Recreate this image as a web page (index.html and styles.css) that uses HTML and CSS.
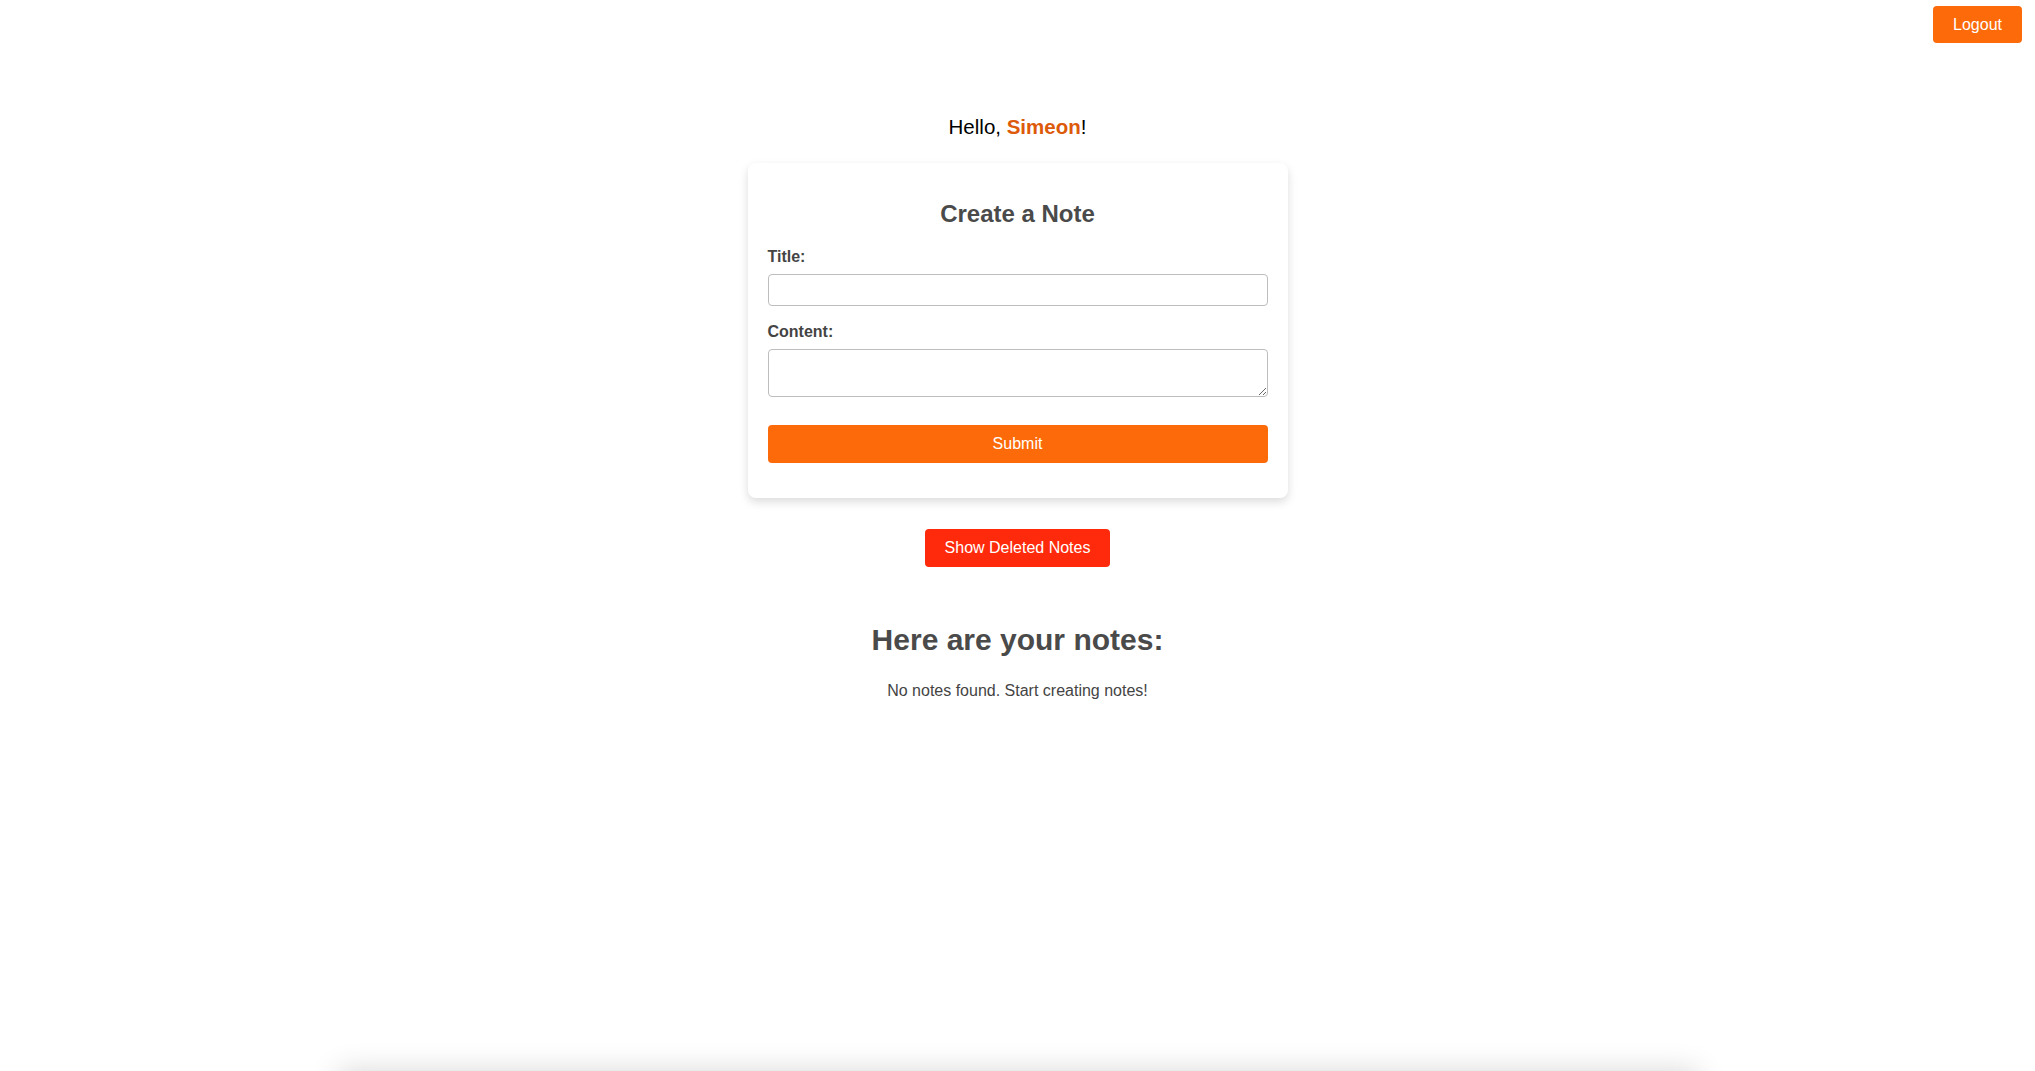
FILE: index.html
```html
<!DOCTYPE html>
<html lang="en">
<head>
<meta charset="utf-8">
<title>Notes</title>
<link rel="stylesheet" href="styles.css">
</head>
<body>
<div class="page">
  <header class="topbar">
    <button class="btn btn-orange btn-logout">Logout</button>
  </header>
  <main class="main">
    <p class="hello">Hello, <span class="name">Simeon</span>!</p>
    <section class="card">
      <h2 class="card-title">Create a Note</h2>
      <form class="note-form">
        <label class="label label-first" for="title">Title:</label>
        <input class="field field-input" id="title" type="text">
        <label class="label label-second" for="content">Content:</label>
        <textarea class="field field-area" id="content"></textarea>
        <button type="button" class="btn btn-orange btn-submit">Submit</button>
      </form>
    </section>
    <button class="btn btn-red btn-deleted">Show Deleted Notes</button>
    <h2 class="notes-title">Here are your notes:</h2>
    <p class="empty">No notes found. Start creating notes!</p>
  </main>
</div>
<footer class="footer"></footer>
</body>
</html>
```
FILE: styles.css
```css
html, body {
  margin: 0;
  padding: 0;
  background: #ffffff;
  font-family: "Liberation Sans", Arial, Helvetica, sans-serif;
}

.page {
  min-height: 1071px;
  box-sizing: border-box;
}

.topbar {
  display: flex;
  justify-content: flex-end;
  padding: 6px 13px 0 0;
}

.btn {
  border: none;
  color: #ffffff;
  font-family: "Liberation Sans", Arial, Helvetica, sans-serif;
  font-size: 16px;
  line-height: 18px;
  padding: 10px 20px;
  border-radius: 4px;
  cursor: pointer;
}

.btn-orange {
  background: #fc6a0a;
}

.btn-red {
  background: #ff2a0b;
}

.btn-logout {
  padding: 10px 20px 9px;
}

.main {
  display: flex;
  flex-direction: column;
  align-items: center;
}

.hello {
  margin: 72px 0 0;
  font-size: 20.5px;
  line-height: 23px;
  color: #000000;
}

.name {
  color: #dd5a0a;
  font-weight: bold;
}

.card {
  margin-top: 25px;
  width: 500px;
  padding: 20px 20px 35px;
  background: #ffffff;
  border-radius: 8px;
  box-shadow: 0 4px 10px rgba(0, 0, 0, 0.14);
}

.card-title {
  margin: 17px 0 0;
  text-align: center;
  font-size: 24px;
  line-height: 28px;
  color: #4a4a4a;
}

.note-form {
  display: flex;
  flex-direction: column;
}

.label {
  display: block;
  font-size: 16px;
  line-height: 18px;
  font-weight: bold;
  color: #444444;
}

.label-first {
  margin: 20px 0 8px;
}

.label-second {
  margin: 17px 0 8px;
}

.field {
  box-sizing: border-box;
  width: 100%;
  border: 1px solid #bdbdbd;
  border-radius: 4px;
  font-family: "Liberation Sans", Arial, Helvetica, sans-serif;
  font-size: 16px;
  padding: 6px 8px;
  margin: 0;
  background: #ffffff;
}

.field-input {
  height: 32px;
}

.field-area {
  height: 48px;
  resize: vertical;
  display: block;
}

.btn-submit {
  margin-top: 28px;
  width: 100%;
  border-radius: 4px;
}

.btn-deleted {
  margin-top: 31px;
}

.notes-title {
  margin: 56px 0 0;
  font-size: 30px;
  line-height: 34px;
  color: #4a4a4a;
}

.empty {
  margin: 25px 0 0;
  font-size: 16px;
  line-height: 18px;
  color: #444444;
}

.footer {
  width: 1360px;
  height: 80px;
  margin: 0 auto;
  background: #ffffff;
  box-shadow: 0 0 30px rgba(0, 0, 0, 0.16);
}
```
